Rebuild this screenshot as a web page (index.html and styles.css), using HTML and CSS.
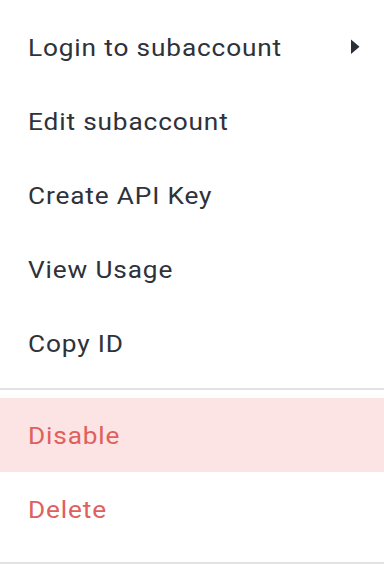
FILE: index.html
```html
<!DOCTYPE html>
<html>
<head>
<meta charset="utf-8">
<link rel="stylesheet" href="styles.css">
</head>
<body>
<div class="menu">
  <ul class="group">
    <li class="item has-sub"><span class="label">Login to subaccount</span>
      <svg class="caret" width="9" height="16" viewBox="0 0 9 16"><path d="M0 0.5 L8.5 7.75 L0 15 Z" fill="#2b2f36"/></svg>
    </li>
    <li class="item"><span class="label">Edit subaccount</span></li>
    <li class="item"><span class="label">Create API Key</span></li>
    <li class="item"><span class="label">View Usage</span></li>
    <li class="item"><span class="label">Copy ID</span></li>
  </ul>
  <ul class="group danger">
    <li class="item active"><span class="label">Disable</span></li>
    <li class="item"><span class="label">Delete</span></li>
  </ul>
</div>
</body>
</html>
```
FILE: styles.css
```css
html, body {
  margin: 0;
  padding: 0;
  background: #ffffff;
}
body {
  font-family: Roboto, "Noto Sans", sans-serif;
}
.menu {
  width: 384px;
  height: 564px;
  box-sizing: border-box;
  padding-top: 10px;
  border-bottom: 2px solid #e2e2e2;
}
.group {
  list-style: none;
  margin: 0;
  padding: 0;
}
.group + .group {
  margin-top: 8px;
  border-top: 2px solid #e2e2e2;
  padding-top: 8px;
}
.item {
  height: 74px;
  display: flex;
  align-items: center;
  justify-content: space-between;
  padding: 0 24px 0 28px;
  font-size: 24.5px;
  letter-spacing: 0.8px;
  color: #2e323a;
}
.label {
  display: inline-block;
  transform: scaleX(1.07);
  transform-origin: left center;
}
.danger .item {
  color: #e0605b;
}
.item.active {
  background: #fbe4e3;
}
.caret {
  display: block;
}
```
